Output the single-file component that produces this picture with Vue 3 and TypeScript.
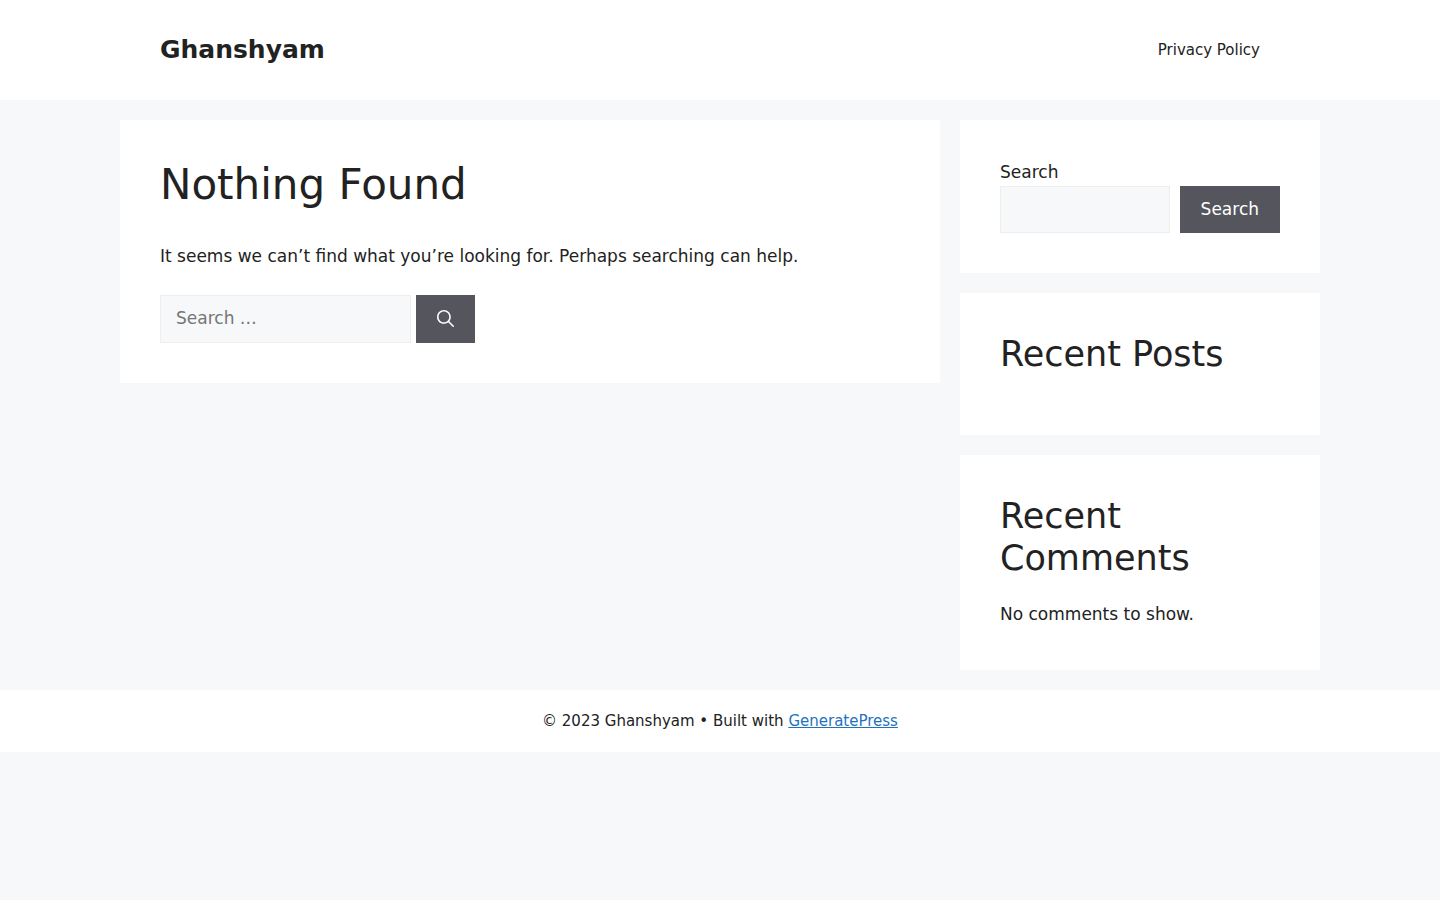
<script setup lang="ts">
import { ref } from 'vue'

const mainQuery = ref<string>('')
const sideQuery = ref<string>('')
</script>

<template>
  <div class="page">
    <header class="site-header">
      <div class="header-inner">
        <p class="site-title">Ghanshyam</p>
        <nav><a class="nav-link" href="#">Privacy Policy</a></nav>
      </div>
    </header>

    <div class="content">
      <main class="card main-card">
        <h1>Nothing Found</h1>
        <p class="lead">It seems we can’t find what you’re looking for. Perhaps searching can help.</p>
        <form class="search-form" @submit.prevent>
          <input v-model="mainQuery" class="field main-field" type="search" placeholder="Search …" />
          <button class="button icon-button" aria-label="Search">
            <svg viewBox="0 0 512 512" width="17" height="17" aria-hidden="true">
              <path
                fill="currentColor"
                fill-rule="evenodd"
                clip-rule="evenodd"
                d="M208 48c-88.366 0-160 71.634-160 160s71.634 160 160 160 160-71.634 160-160S296.366 48 208 48zM0 208C0 93.125 93.125 0 208 0s208 93.125 208 208c0 48.741-16.765 93.566-44.843 129.024l133.826 134.018c9.366 9.379 9.355 24.575-.025 33.941-9.379 9.366-24.575 9.355-33.941-.025L337.238 370.987C301.747 399.167 256.839 416 208 416 93.125 416 0 322.875 0 208z"
              />
            </svg>
          </button>
        </form>
      </main>

      <aside class="sidebar">
        <section class="card">
          <form @submit.prevent>
            <label class="label" for="side-search">Search</label>
            <div class="side-search">
              <input id="side-search" v-model="sideQuery" class="field side-field" type="search" />
              <button class="button text-button">Search</button>
            </div>
          </form>
        </section>
        <section class="card posts">
          <h2>Recent Posts</h2>
        </section>
        <section class="card">
          <h2>Recent Comments</h2>
          <p class="empty">No comments to show.</p>
        </section>
      </aside>
    </div>

    <footer class="site-footer">
      © 2023 Ghanshyam • Built with <a href="#">GeneratePress</a>
    </footer>
  </div>
</template>

<style>
body {
  margin: 0;
  background: #f7f8f9;
}
</style>

<style scoped>
.page {
  color: #222222;
  font: 17px/1.5 "DejaVu Sans", sans-serif;
}
.page * {
  box-sizing: border-box;
}
h1,
h2,
p {
  margin: 0;
  font-weight: 400;
}
.site-header,
.site-footer {
  background: #ffffff;
}
.header-inner {
  display: flex;
  align-items: center;
  justify-content: space-between;
  width: 1200px;
  height: 100px;
  margin: 0 auto;
  padding: 0 60px 0 40px;
}
.site-title {
  font-size: 25px;
  line-height: 37.5px;
  font-weight: 700;
}
.nav-link {
  display: block;
  color: #222222;
  font-size: 15px;
  line-height: 60px;
  text-decoration: none;
}
.content {
  display: flex;
  align-items: flex-start;
  gap: 20px;
  width: 1200px;
  margin: 0 auto;
  padding: 20px 0;
}
.card {
  padding: 40px;
  background: #ffffff;
}
.main-card {
  width: 820px;
  height: 263px;
}
h1 {
  font-size: 42px;
  line-height: 50px;
}
.lead {
  margin-top: 33px;
  line-height: 26px;
}
.search-form {
  display: flex;
  gap: 5px;
  margin-top: 26px;
}
.field {
  height: 48px;
  margin: 0;
  padding: 10px 15px;
  color: #666666;
  background: #f7f8f9;
  border: 1px solid #eeeeee;
  border-radius: 0;
  font: inherit;
  outline: none;
}
.main-field {
  width: 251px;
  padding: 9px 15px 11px;
}
.button {
  display: flex;
  align-items: center;
  justify-content: center;
  padding: 0;
  color: #ffffff;
  background: #55555e;
  border: 0;
  font: inherit;
}
.icon-button {
  width: 59px;
  height: 48px;
  padding-bottom: 1px;
}
.sidebar {
  display: flex;
  flex-direction: column;
  gap: 20px;
  width: 360px;
}
.label {
  display: block;
}
.side-search {
  display: flex;
  gap: 10px;
}
.side-field {
  width: 170px;
  height: 47px;
}
.text-button {
  width: 100px;
  height: 47px;
  padding: 1px 0.4px 0 0;
}
.posts {
  height: 142px;
}
h2 {
  margin-bottom: 23px;
  font-size: 35px;
  line-height: 42px;
}
.empty {
  height: 28px;
}
.site-footer {
  height: 62px;
  padding: 20px 0;
  font-size: 15px;
  line-height: 22.5px;
  text-align: center;
}
.site-footer a {
  color: #1e73be;
}
</style>
